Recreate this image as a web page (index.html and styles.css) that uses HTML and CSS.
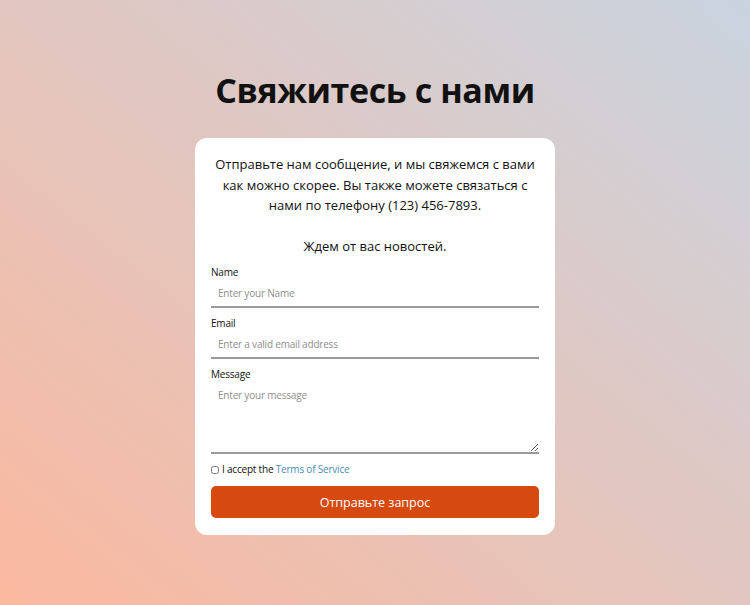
FILE: index.html
```html
<!DOCTYPE html>
<html lang="ru">
<head>
<meta charset="utf-8">
<title>Свяжитесь с нами</title>
<link rel="stylesheet" href="styles.css">
</head>
<body>
<main class="page">
  <h1 class="title">Свяжитесь с нами</h1>
  <section class="card">
    <p class="intro">Отправьте нам сообщение, и мы свяжемся с вами как можно скорее. Вы также можете связаться с нами по телефону (123) 456-7893.</p>
    <p class="intro intro-last">Ждем от вас новостей.</p>
    <form class="form">
      <label class="field">
        <span class="label">Name</span>
        <input class="input" type="text" placeholder="Enter your Name">
      </label>
      <label class="field">
        <span class="label">Email</span>
        <input class="input" type="email" placeholder="Enter a valid email address">
      </label>
      <label class="field">
        <span class="label">Message</span>
        <textarea class="input textarea" placeholder="Enter your message"></textarea>
      </label>
      <label class="check">
        <input type="checkbox" class="checkbox">
        <span>I accept the <a class="link" href="#">Terms of Service</a></span>
      </label>
      <button type="button" class="button">Отправьте запрос</button>
    </form>
  </section>
</main>
</body>
</html>
```
FILE: styles.css
```css
* { box-sizing: border-box; }
html, body { margin: 0; height: 100%; }
body {
  background: linear-gradient(to top right, #fbb99f 0%, #e2c6bf 50%, #c9d4e0 100%);
  font-family: "Open Sans", "Noto Sans", sans-serif;
  color: #111;
}
.page {
  display: flex;
  flex-direction: column;
  align-items: center;
  padding-top: 68px;
}
.title {
  margin: 0;
  font-family: "Open Sans", "Noto Sans", sans-serif;
  font-size: 34px;
  font-weight: 700;
  line-height: 44px;
  letter-spacing: -0.4px;
  color: #111;
}
.card {
  margin-top: 26px;
  width: 360px;
  background: #fff;
  border-radius: 12px;
  padding: 16px 16px 17px;
}
.intro {
  margin: 0;
  text-align: center;
  font-size: 13px;
  line-height: 20.5px;
  color: #111;
  padding: 0 4px;
}
.intro-last { margin-top: 20px; }
.form {
  display: flex;
  flex-direction: column;
  margin-top: 9px;
}
.field {
  display: flex;
  flex-direction: column;
  margin-bottom: 8px;
}
.label {
  font-size: 10px;
  line-height: 15px;
  letter-spacing: -0.2px;
  color: #111;
}
.input {
  border: none;
  border-bottom: 2px solid #9a9a9a;
  height: 28px;
  padding: 0 7px;
  font-family: inherit;
  font-size: 10px;
  letter-spacing: -0.2px;
  color: #111;
  outline: none;
  background: #fff;
}
.input::placeholder { color: #8e8e8e; }
.textarea {
  height: 72px;
  padding-top: 6px;
  resize: vertical;
}
.check {
  display: flex;
  align-items: center;
  gap: 3px;
  font-size: 10px;
  line-height: 15px;
  letter-spacing: -0.2px;
  color: #111;
}
.checkbox {
  margin: 0;
  width: 8px;
  height: 8px;
}
.link { color: #4a8db5; text-decoration: none; }
.button {
  margin-top: 9px;
  height: 32px;
  border: none;
  border-radius: 5px;
  background: #d6490f;
  color: #fff;
  font-family: inherit;
  font-size: 12.5px;
}
```
